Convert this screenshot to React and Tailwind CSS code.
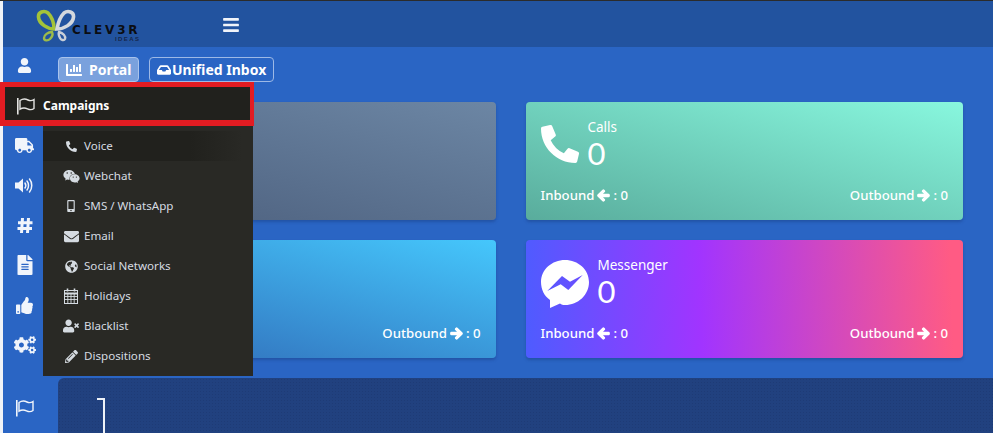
import React from "react";
import {
  FaUser, FaTruck, FaFileAlt, FaThumbsUp, FaCogs,
  FaPhoneAlt, FaWeixin, FaMobileAlt, FaEnvelope, FaGlobeAmericas, FaUserTimes,
  FaPencilAlt, FaChartBar, FaInbox, FaBars, FaArrowLeft, FaArrowRight,
} from "react-icons/fa";

const font = { fontFamily: '"Noto Sans", "Open Sans", sans-serif' };

function Logo() {
  return (
    <div className="flex h-[46px] w-[105px] items-start">
      <svg width="40" height="34" viewBox="0 0 40 34" fill="none" className="mt-[8px] shrink-0">
        <path d="M18 20C12 20 3 15 2.500 8C2 3 8 1 12 4C16 8 18 14 18 20Z" stroke="#a4c339" strokeWidth="3.600" />
        <path d="M21 20C22 14 24 8 28 4C32 1 38 3 37.500 8C37 15 28 20 21 20Z" stroke="#d4d8de" strokeWidth="3.600" />
        <path d="M16 23C12 23 8 26 8 29C8 32 12 32 14 30C16 28 17 25 16 23Z" stroke="#9dbb4a" strokeWidth="2.400" />
        <path d="M23 23C27 24 30 27 29 30C28 32 25 31 24 29C23 27 22 25 23 23Z" stroke="#c9cfd8" strokeWidth="2.400" />
      </svg>
      <div className="-ml-[4px] mt-[23px] flex flex-col items-end leading-none">
        <span className="text-[12px] font-bold leading-[12px] tracking-[2.800px] text-[#0b0d12]" style={{ fontFamily: '"DejaVu Sans", sans-serif' }}>CLEV3R</span>
        <span className="text-[6px] font-bold leading-[6px] tracking-[1.400px] text-[#16264a]" style={{ fontFamily: '"Liberation Sans", sans-serif' }}>IDEAS</span>
      </div>
    </div>
  );
}

function FlagO({ className }) {
  return (
    <svg width="19" height="18" viewBox="0 0 19 18" fill="none" stroke="currentColor" className={className}>
      <path d="M1.800 1V17.500" strokeWidth="1.600" />
      <path d="M4 3.500C7 1.500 10 2 12 3C14 4 16 3.800 18 2.500V11.500C16 13 13.500 12.800 11.500 11.800C9 10.600 6.500 10.600 4 12.200Z" strokeWidth="1.400" />
    </svg>
  );
}

function VolumeIcon() {
  return (
    <svg width="19" height="17" viewBox="0 0 19 17" fill="none">
      <path d="M0 5.500H3.500L8 1.500V15.500L3.500 11.500H0Z" fill="currentColor" />
      <path d="M10 6C11 7.500 11 9.500 10 11M12 4C14 6.500 14 10.500 12 13M14.500 2C17.500 5.500 17.500 11.500 14.500 15" stroke="currentColor" strokeWidth="1.500" strokeLinecap="round" />
    </svg>
  );
}

function HashIcon() {
  return (
    <svg width="16" height="17" viewBox="0 0 16 17" fill="none" stroke="currentColor" strokeWidth="3">
      <path d="M5.500 1L4.500 16M11.500 1L10.500 16M1 5.800H15.500M0.500 11.400H15" />
    </svg>
  );
}

function CalendarIcon() {
  return (
    <svg width="14" height="16" viewBox="0 0 14 16" fill="none" stroke="currentColor">
      <rect x="0.500" y="2.500" width="13" height="13" strokeWidth="1" />
      <path d="M0 5.500H14" strokeWidth="2" />
      <path d="M3.500 0.500V3.500M10.500 0.500V3.500" strokeWidth="1.600" />
      <path d="M0.500 8.500H13.500M0.500 11.500H13.500M3.800 6V15.500M7 6V15.500M10.200 6V15.500" strokeWidth="0.900" />
    </svg>
  );
}

function MessengerIcon() {
  return (
    <svg width="48" height="48" viewBox="0 0 48 48" className="mt-[4px] shrink-0">
      <path
        fill="#fff"
        fillRule="evenodd"
        d="M24 0C37 0 48 9.500 48 22C48 35 37 45 24 45C22 45 20.500 44.500 19 43.500L9 48V40C3 36 0 29 0 22C0 9.500 11 0 24 0ZM6.300 31L21 16L29 21.700L41.700 15L27.300 30L19.700 24.300Z"
      />
    </svg>
  );
}

const sideTop = [
  <FaTruck size={19} />,
  <VolumeIcon />,
  <HashIcon />,
  <FaFileAlt size={20} />,
  <FaThumbsUp size={17} />,
  <FaCogs size={22} />,
];

function Sidebar() {
  return (
    <aside className="flex w-[40px] shrink-0 flex-col items-center pl-[3px] text-[#f1f5fb]">
      <div className="flex h-[36px] items-center"><FaUser size={15} /></div>
      <div className="h-[42px]" />
      {sideTop.map((icon, i) => (
        <div key={i} className="flex h-[40px] items-center justify-center">{icon}</div>
      ))}
      <div className="mt-[23px] flex h-[40px] items-center justify-center"><FlagO /></div>
    </aside>
  );
}

function Footer({ left = true }) {
  return (
    <div className="mt-auto flex items-center justify-between text-[13.2px] font-medium leading-[20px] text-white">
      {left ? (
        <span className="flex items-center gap-[3px]">Inbound <FaArrowLeft size={13} stroke="currentColor" strokeWidth={50} /> : 0</span>
      ) : <span />}
      <span className="flex items-center gap-[3px]">Outbound <FaArrowRight size={13} stroke="currentColor" strokeWidth={50} /> : 0</span>
    </div>
  );
}

function Card({ gradient, icon, label, showBody = true, showLeft = true }) {
  return (
    <div className={`flex h-[118px] flex-col rounded-[4px] px-[15px] pb-[15px] shadow-[0_2px_3px_rgba(20,50,110,0.35)] ${gradient}`}>
      {showBody && (
        <>
          {icon && (
            <div className="flex items-start gap-[9px] pt-[16px]">
              {icon}
              <div className="flex flex-col text-white">
                <span className="text-[13.5px] leading-[18px]">{label}</span>
                <span className="mt-[1px] text-[31px] font-normal leading-[33px]" style={{ fontFamily: 'Lato, sans-serif' }}>0</span>
              </div>
            </div>
          )}
          <Footer left={showLeft} />
        </>
      )}
    </div>
  );
}

const menu = [
  [<FaPhoneAlt size={11} />, "Voice"],
  [<FaWeixin size={17} />, "Webchat"],
  [<FaMobileAlt size={12} />, "SMS / WhatsApp"],
  [<FaEnvelope size={15} />, "Email"],
  [<FaGlobeAmericas size={13} />, "Social Networks"],
  [<CalendarIcon />, "Holidays"],
  [<FaUserTimes size={16} />, "Blacklist"],
  [<FaPencilAlt size={13} />, "Dispositions"],
];

function CampaignMenu() {
  return (
    <div className="absolute left-0 top-[81px] w-[253px]">
      <div className="flex h-[44px] w-[254px] items-center border-b-[6px] border-l-[5px] border-r-[4px] border-t-[5px] border-[#e21c22] bg-[#21211d] pt-[4px] text-white">
        <FlagO className="ml-[11px] text-[#e4e4e2]" />
        <span className="ml-[8px] text-[12px] font-bold">Campaigns</span>
      </div>
      <div className="ml-[43px] bg-[#292925] py-[5px]">
        {menu.map(([icon, t], i) => (
          <div key={t} className={`flex h-[30px] items-center text-[11.6px] text-[#d5dbe1] ${i === 0 ? "bg-[linear-gradient(90deg,#21211d_70%,#292925_95%)]" : ""}`}>
            <span className="flex w-[41px] justify-end pr-[4px]">
              <span className="flex w-[18px] justify-center">{icon}</span>
            </span>
            <span>{t}</span>
          </div>
        ))}
      </div>
    </div>
  );
}

export default function App() {
  return (
    <div className="relative flex h-[433px] w-[993px] overflow-hidden border-t border-[#2b2b2b] bg-[#2a65c4]" style={font}>
      <div className="w-[3px] shrink-0 bg-[#f0f3f8]" />
      <div className="flex min-w-0 flex-1 flex-col">
        <header className="flex h-[46px] shrink-0 items-center bg-[#22539f] pl-[33px]">
          <Logo />
          <FaBars size={18} className="ml-[81px] mt-[1px] text-[#f1f4fa]" />
        </header>
        <div className="flex min-h-0 flex-1">
          <Sidebar />
          <main className="min-w-0 flex-1 pl-[15px] pr-[30px] pt-[10px]">
            <div className="flex gap-[10px] text-[14px] font-bold text-white">
              <div className="flex h-[25px] w-[81px] items-center rounded-[4px] border border-[#a9c3ec] bg-[#7aa1dd] pl-[7px]">
                <FaChartBar size={16} />
                <span className="ml-[7px]">Portal</span>
              </div>
              <div className="flex h-[25px] w-[125px] items-center rounded-[4px] border border-[#9db9e6] pl-[7px]">
                <FaInbox size={14} />
                <span className="ml-[1px]">Unified Inbox</span>
              </div>
            </div>
            <div className="mt-[20px] grid grid-cols-2 gap-x-[30px] gap-y-[20px]">
              <Card gradient="bg-[linear-gradient(to_top_right,#4b5e7c,#6c86a4)]" showBody={false} />
              <Card
                gradient="bg-[linear-gradient(to_top_right,#59ac9c,#88f7de)]"
                label="Calls"
                icon={<FaPhoneAlt size={38} className="mt-[7px] shrink-0 text-white" />}
              />
              <Card gradient="bg-[linear-gradient(to_top_right,#2f66b4,#45c7fc)]" showLeft={false} />
              <Card
                gradient="bg-[linear-gradient(88deg,#4e5cff_0%,#a134ff_40%,#ff5b84_97%)]"
                label="Messenger"
                icon={<MessengerIcon />}
              />
            </div>
            <div className="-mr-[30px] mt-[20px] h-[60px] rounded-tl-[6px] bg-[#21417f] bg-[radial-gradient(#1e3b76_1px,transparent_1px)] bg-[size:3px_3px] pl-[39px] pt-[20px]">
              <div className="h-full w-[8px] border-r-2 border-t-2 border-[#eef2f8]" />
            </div>
          </main>
        </div>
      </div>
      <CampaignMenu />
    </div>
  );
}
